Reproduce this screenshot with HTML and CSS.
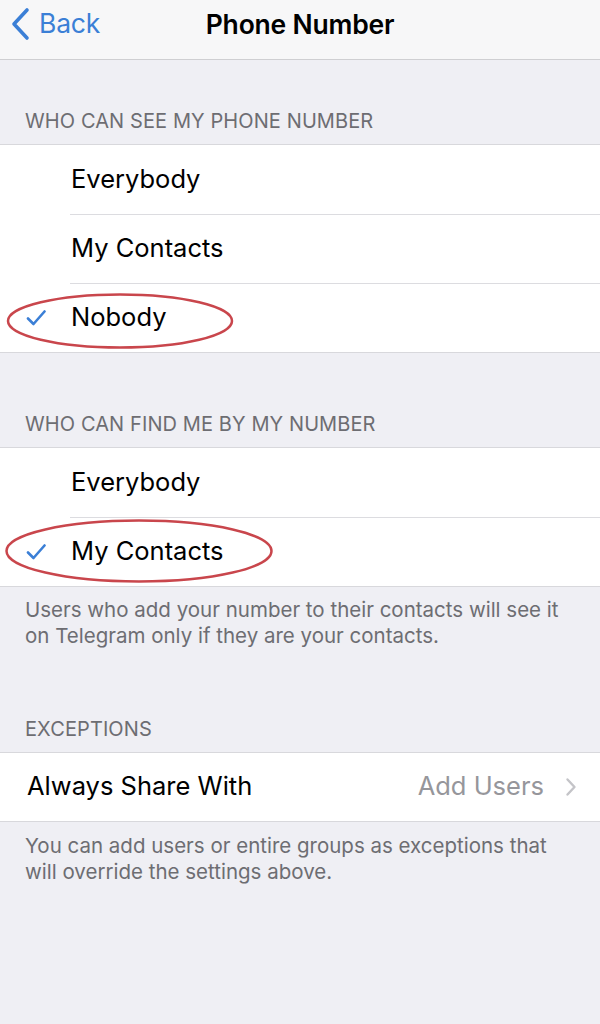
FILE: index.html
```html
<!DOCTYPE html>
<html lang="en">
<head>
<meta charset="utf-8">
<title>Phone Number</title>
<link rel="stylesheet" href="styles.css">
</head>
<body>
<div class="page">
  <header class="nav">
    <a class="nav-back" href="#">
      <svg class="nav-chevron" width="20" height="34" viewBox="0 0 20 34"><path d="M16 3 L3 17 L16 31" fill="none" stroke="currentColor" stroke-width="3.6" stroke-linecap="round" stroke-linejoin="round"/></svg>
      <span>Back</span>
    </a>
    <h1 class="nav-title">Phone Number</h1>
  </header>

  <div class="header header-first">WHO CAN SEE MY PHONE NUMBER</div>
  <ul class="group">
    <li class="row"><span class="check-slot"></span><span class="row-label">Everybody</span></li>
    <li class="row"><span class="check-slot"></span><span class="row-label">My Contacts</span></li>
    <li class="row"><span class="check-slot"><svg class="check" width="20" height="18" viewBox="0 0 20 18"><path d="M2 9.5 L7.5 15 L18.5 2.5" fill="none" stroke="currentColor" stroke-width="2.6" stroke-linecap="round" stroke-linejoin="round"/></svg></span><span class="row-label">Nobody</span></li>
  </ul>

  <div class="header header-second">WHO CAN FIND ME BY MY NUMBER</div>
  <ul class="group">
    <li class="row"><span class="check-slot"></span><span class="row-label">Everybody</span></li>
    <li class="row"><span class="check-slot"><svg class="check" width="20" height="18" viewBox="0 0 20 18"><path d="M2 9.5 L7.5 15 L18.5 2.5" fill="none" stroke="currentColor" stroke-width="2.6" stroke-linecap="round" stroke-linejoin="round"/></svg></span><span class="row-label">My Contacts</span></li>
  </ul>
  <p class="footer footer-first">Users who add your number to their contacts will see it on Telegram only if they are your contacts.</p>

  <div class="header header-third">EXCEPTIONS</div>
  <ul class="group">
    <li class="row row-plain">
      <span class="row-label">Always Share With</span>
      <span class="row-value">Add Users</span>
      <svg class="disclosure" width="12" height="20" viewBox="0 0 12 20"><path d="M2.5 2.5 L9.5 10 L2.5 17.5" fill="none" stroke="currentColor" stroke-width="2.4" stroke-linecap="round" stroke-linejoin="round"/></svg>
    </li>
  </ul>
  <p class="footer">You can add users or entire groups as exceptions that will override the settings above.</p>

  <svg class="marks" width="600" height="1024" viewBox="0 0 600 1024">
    <ellipse cx="120" cy="321" rx="112" ry="26.5"/>
    <ellipse cx="139" cy="551" rx="132.5" ry="30.5"/>
  </svg>
</div>
</body>
</html>
```

FILE: styles.css
```css
* { box-sizing: border-box; }

html, body {
  margin: 0;
  padding: 0;
  background: #efeff4;
}

body {
  font-family: Inter, "Liberation Sans", Arial, sans-serif;
  color: #000;
  width: 600px;
  height: 1024px;
  overflow: hidden;
}

.page {
  position: relative;
  width: 600px;
  height: 1024px;
}

/* navigation bar */
.nav {
  display: flex;
  align-items: center;
  justify-content: center;
  position: relative;
  height: 60px;
  background: #f7f7f8;
  border-bottom: 1px solid #cfcfd2;
}

.nav-back {
  position: absolute;
  left: 11px;
  top: 7px;
  display: flex;
  align-items: center;
  gap: 8px;
  color: #3b7fd6;
  text-decoration: none;
  font-size: 26.5px;
  letter-spacing: -0.2px;
}

.nav-back span { margin-top: -3px; }

.nav-chevron { display: block; }

.nav-title {
  margin: 0 0 12px;
  font-size: 26.5px;
  font-weight: 600;
  letter-spacing: -0.2px;
}

/* section headers */
.header {
  display: flex;
  align-items: flex-end;
  padding: 0 25px 11px;
  font-size: 20px;
  line-height: 24px;
  color: #6d6d72;
  letter-spacing: 0.1px;
}

.header-first { height: 84px; }
.header-second { height: 94px; }
.header-third { height: 103px; }

/* grouped list */
.group {
  list-style: none;
  margin: 0;
  padding: 0;
  background: #fff;
  border-top: 1px solid #d8d8dc;
  border-bottom: 1px solid #d8d8dc;
}

.row {
  display: flex;
  align-items: center;
  height: 69px;
  padding-bottom: 3px;
  position: relative;
  font-size: 25.5px;
}

.row + .row::before {
  content: "";
  position: absolute;
  left: 70px;
  right: 0;
  top: 0;
  border-top: 1px solid #dcdce0;
}

.check-slot {
  width: 71px;
  flex: none;
  display: flex;
  align-items: center;
  padding-left: 26px;
  padding-top: 4px;
  color: #3b7fd6;
}

.check { display: block; }

.row-label { flex: none; }

.row-plain {
  height: 68px;
  padding: 0 23px 3px 27px;
}
.row-plain .row-label { flex: 1; }

.row-value {
  color: #96969b;
  margin-right: 21px;
}

.disclosure {
  display: block;
  color: #c4c4c8;
  margin-top: 3px;
}

/* section footers */
.footer {
  margin: 0;
  padding: 11px 25px 0;
  font-size: 20.5px;
  line-height: 26px;
  color: #6d6d72;
}

.footer-first { padding-top: 10px; }

/* red annotation rings */
.marks {
  position: absolute;
  left: 0;
  top: 0;
  pointer-events: none;
}

.marks ellipse {
  fill: none;
  stroke: #c9464c;
  stroke-width: 2.5;
}
```
